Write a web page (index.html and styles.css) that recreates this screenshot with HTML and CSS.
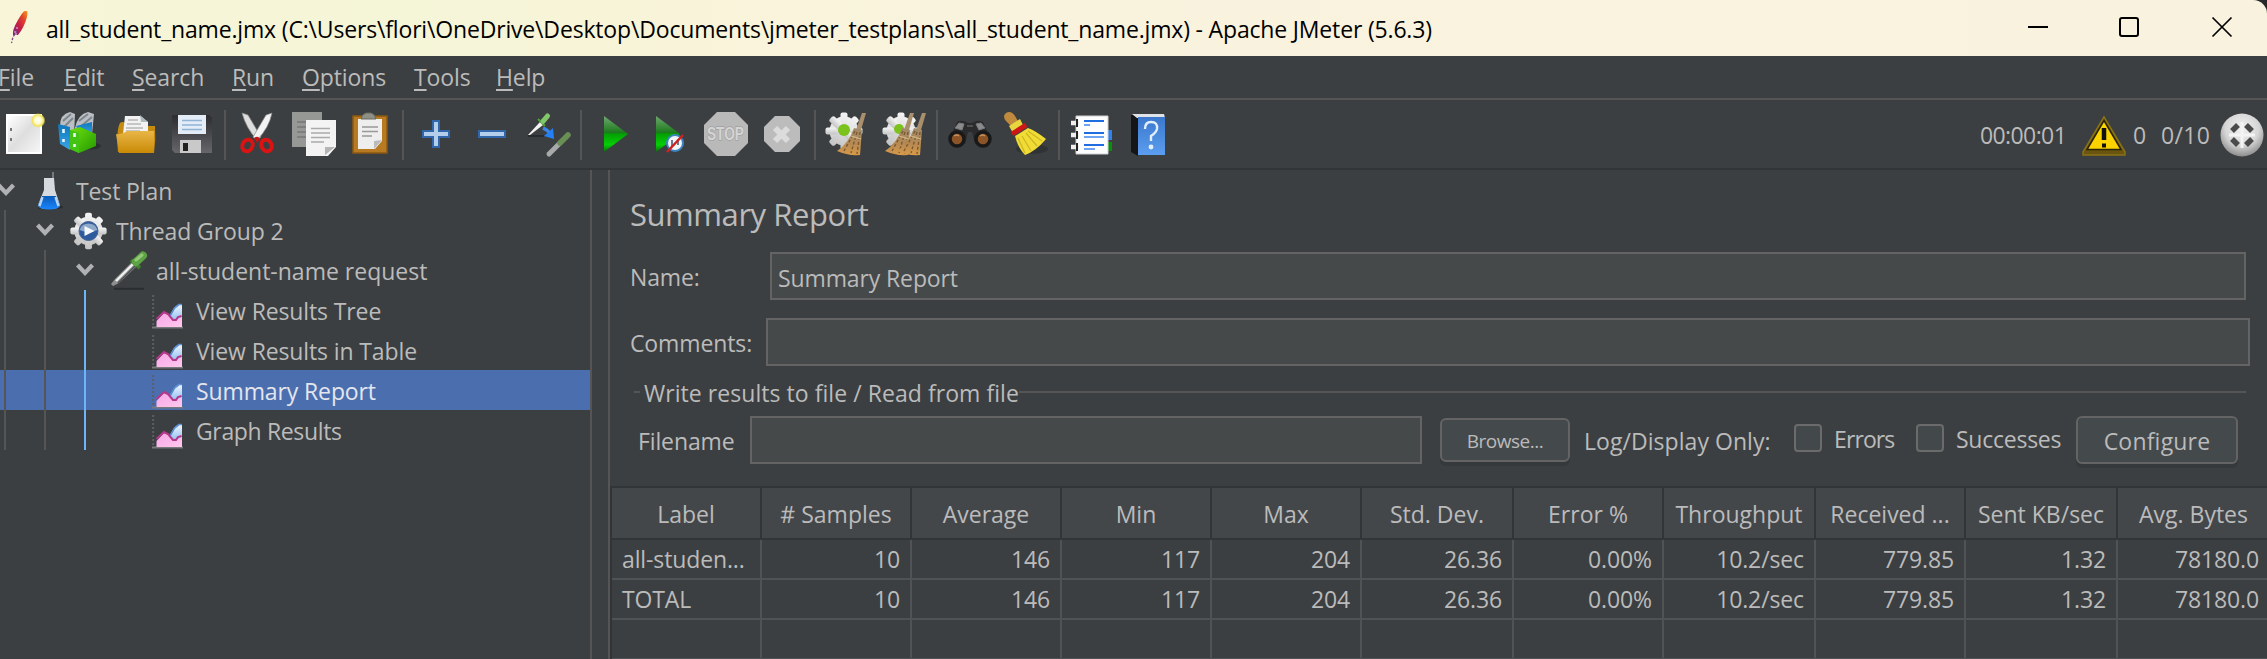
FILE: index.html
```html
<!DOCTYPE html>
<html lang="en">
<head>
<meta charset="utf-8">
<title>Apache JMeter (5.6.3)</title>
<link rel="stylesheet" href="styles.css">
</head>
<body>
<svg class="defs" width="0" height="0" aria-hidden="true">
  <defs>
    <linearGradient id="feather" x1="1" y1="0" x2="0" y2="1"><stop offset="0" stop-color="#f99d1c"/><stop offset=".3" stop-color="#e0452a"/><stop offset=".6" stop-color="#c81d43"/><stop offset="1" stop-color="#6d2a8c"/></linearGradient>
    <linearGradient id="paper" x1="0" y1="0" x2="1" y2="1"><stop offset="0" stop-color="#fff"/><stop offset=".5" stop-color="#dedede"/><stop offset="1" stop-color="#f6f6f6"/></linearGradient>
    <linearGradient id="blue" x1="0" y1="0" x2="0" y2="1"><stop offset="0" stop-color="#0d77bd"/><stop offset="1" stop-color="#3aa5e6"/></linearGradient>
    <linearGradient id="green" x1="0" y1="0" x2="1" y2="1"><stop offset="0" stop-color="#6fe010"/><stop offset="1" stop-color="#239a00"/></linearGradient>
    <linearGradient id="gold" x1="0" y1="0" x2="0" y2="1"><stop offset="0" stop-color="#e9b648"/><stop offset="1" stop-color="#c98a05"/></linearGradient>
    <linearGradient id="floppy" x1="0" y1="0" x2="0" y2="1"><stop offset="0" stop-color="#2c2c2f"/><stop offset="1" stop-color="#66666b"/></linearGradient>
    <linearGradient id="play" x1="0" y1="0" x2="0" y2="1"><stop offset="0" stop-color="#6fa86f"/><stop offset=".46" stop-color="#1c7a1c"/><stop offset=".5" stop-color="#04a004"/><stop offset=".8" stop-color="#06cf06"/><stop offset="1" stop-color="#0a6a0a"/></linearGradient>
    <linearGradient id="gear" x1="0" y1="0" x2="0" y2="1"><stop offset="0" stop-color="#f4f4f4"/><stop offset="1" stop-color="#c4c4c4"/></linearGradient>
    <linearGradient id="straw" x1="0" y1="0" x2="0" y2="1"><stop offset="0" stop-color="#a08a6a"/><stop offset=".6" stop-color="#b88a52"/><stop offset="1" stop-color="#d99a48"/></linearGradient>
    <linearGradient id="help" x1="0" y1="0" x2="0" y2="1"><stop offset="0" stop-color="#3a78cc"/><stop offset="1" stop-color="#5b9df0"/></linearGradient>
    <radialGradient id="ball" cx=".5" cy=".35" r=".65"><stop offset="0" stop-color="#f2f2f2"/><stop offset=".6" stop-color="#d6d6d6"/><stop offset="1" stop-color="#8d8d8d"/></radialGradient>
    <radialGradient id="glow"><stop offset="0" stop-color="#fff"/><stop offset=".45" stop-color="#fdfbc8"/><stop offset=".75" stop-color="#f3e25a"/><stop offset="1" stop-color="#f3e25a" stop-opacity="0"/></radialGradient>
    <linearGradient id="liquid" x1="0" y1="0" x2="0" y2="1"><stop offset="0" stop-color="#0a5bb8"/><stop offset="1" stop-color="#1a86ff"/></linearGradient>
    <linearGradient id="pink" x1="0" y1="0" x2="1" y2="1"><stop offset="0" stop-color="#f7a6e6"/><stop offset="1" stop-color="#ffc8ee"/></linearGradient>
    <linearGradient id="sky" x1="0" y1="0" x2="0" y2="1"><stop offset="0" stop-color="#f2f8ff"/><stop offset="1" stop-color="#8fbcf2"/></linearGradient>
    <g id="chart">
      <path d="M1.200 5V37" stroke="#5d6062" stroke-width="2" stroke-dasharray="2 2"/>
      <path d="M0 37.500H31" stroke="#77797b" stroke-width="2"/>
      <path d="M18 25L23 17L27 14H30V31H20Z" fill="url(#sky)"/>
      <path d="M18 26L22.500 18L27 14.500H30" fill="none" stroke="#5b8ed0" stroke-width="1.600"/>
      <path d="M4.500 31L12 23L17 25L22 31L30 27V37H4.500Z" fill="url(#pink)"/>
      <path d="M4.500 29L12 22L16 24L21 30H24L26 27L29.500 26" fill="none" stroke="#b5388c" stroke-width="2"/>
    </g>
    <path id="chev" d="M0 15L7.500 23L15 15" fill="none" stroke="#afb1b3" stroke-width="4.200"/>
    <g id="gearshape">
      <circle r="14.500"/>
      <g id="teeth"><rect x="-3.500" y="-18.500" width="7" height="37" rx="2"/><rect x="-18.500" y="-3.500" width="37" height="7" rx="2"/></g>
      <use href="#teeth" transform="rotate(45)"/>
    </g>
    <g id="broom">
      <path d="M62 113H66L61 130H56Z" fill="#a98f6b"/>
      <path d="M54 128L62 130L60 155Q48 156 37 151Q49 143 54 128Z" fill="url(#straw)"/>
      <path d="M55 131L44 151M57 132L51 153M60 132L57 154" stroke="#7a5a34" stroke-width="1.400" stroke-dasharray="3 2" fill="none"/>
      <path d="M51 136L61 139" stroke="#cbb083" stroke-width="1.500"/>
    </g>
  </defs>
</svg>

<header class="titlebar">
  <svg class="feather" viewBox="8 8 24 36" width="24" height="36"><path d="M27 11Q28 12 27 17Q24 28 18 35L13 35Q12 30 18 20Q23 11 25 11Z" fill="url(#feather)"/><path d="M17 31L13 37L11.500 43" stroke="#7a4a86" stroke-width="1.300" stroke-dasharray="2.500 1.500" fill="none"/><path d="M14 32h2M16 28h2M15 34h2" stroke="#f3c9d6" stroke-width="1"/></svg>
  <h1 class="title">all_student_name.jmx (C:\Users\flori\OneDrive\Desktop\Documents\jmeter_testplans\all_student_name.jmx) - Apache JMeter (5.6.3)</h1>
  <svg class="winctl" viewBox="2020 8 220 40" width="220" height="40" fill="none" stroke="#000" stroke-width="2"><path d="M2028 27H2048"/><rect x="2120" y="18" width="18" height="18" rx="2"/><path d="M2212.500 17.500L2231.500 36.500M2231.500 17.500L2212.500 36.500" stroke-width="1.700"/></svg>
</header>

<nav class="menubar">
  <span class="menu m-file"><u>F</u>ile</span><span class="menu m-edit"><u>E</u>dit</span><span class="menu m-search"><u>S</u>earch</span><span class="menu m-run"><u>R</u>un</span><span class="menu m-options"><u>O</u>ptions</span><span class="menu m-tools"><u>T</u>ools</span><span class="menu m-help"><u>H</u>elp</span>
</nav>

<div class="toolbar">
  <svg width="50" height="50" viewBox="0 110 50 50"><path d="M6 114H42V154H6Z" fill="#fff"/><path d="M8 116H40V152H8Z" fill="url(#paper)"/><path d="M11 128v3M11 138v3" stroke="#777" stroke-width="2"/><circle cx="38" cy="120.500" r="7.500" fill="url(#glow)"/></svg>
  <svg width="58" height="50" viewBox="50 110 58 50"><path d="M60 126Q60 114 70 112L75 114L74 134L62 136ZM75 128Q78 114 88 112L94 114L92 134L80 136Z" fill="#b9bfc4"/><path d="M63 121L71 114M64 127L73 118M79 121L88 114M80 127L92 117" stroke="#7d848a" stroke-width="1.800"/><path d="M58 124L70 127V150L60 144Z" fill="url(#blue)"/><path d="M76 126L92 122V136L80 134Z" fill="url(#blue)"/><ellipse cx="90" cy="146" rx="11" ry="3.500" fill="#2c2f31"/><path d="M70 130L80 127L96 134V146L79 153L70 149Z" fill="url(#green)"/><path d="M70 130L79 133V153L70 149Z" fill="#43c412"/><path d="M74.500 133v4M74.500 144v3M63.500 129v4M63.500 139v3" stroke="#e9f7ff" stroke-width="2.600"/></svg>
  <svg width="56" height="50" viewBox="108 110 56 50"><path d="M118 152Q116 130 120 123Q122 121 126 123L128 126H155Q156 140 154 153Z" fill="#c58b10"/><path d="M125 116H140L148 122V134H123Z" fill="#f2f2f2"/><path d="M140 115L148 122H141Z" fill="#aebcc0"/><path d="M128 120h10M127 124h14M126 128h17M126 131h14" stroke="#9a9a9a" stroke-width="1.200"/><path d="M116 134Q122 135 127 131L154 131V148Q154 153 150 153H119Z" fill="url(#gold)"/></svg>
  <svg width="60" height="50" viewBox="164 110 60 50"><path d="M173 115H209L212 118V153H175L172 150V116Z" fill="url(#floppy)"/><path d="M178 115H206V134H178Z" fill="#e4edf7"/><path d="M182 120.500h20M182 125h20M182 129.500h20" stroke="#8eb4d8" stroke-width="1.700"/><path d="M180 140H201V153H180Z" fill="#c9c9c9"/><path d="M183 143h5v8h-5z" fill="#222"/></svg>
  <i class="sep"></i>
  <svg width="56" height="50" viewBox="226 110 56 50"><path d="M242 113L248 115L261 137L257 140Q246 128 242 113Z" fill="#dedede" stroke="#888" stroke-width=".7"/><path d="M272 113L266 115L253 137L257 140Q269 128 272 113Z" fill="#f3f3f3" stroke="#888" stroke-width=".7"/><path d="M254 138Q258 135 260 139L257 143Z" fill="#c41414"/><ellipse cx="247.500" cy="145.500" rx="5" ry="6" transform="rotate(28 247.500 145.500)" fill="none" stroke="#dc1313" stroke-width="4"/><ellipse cx="266.500" cy="145.500" rx="5" ry="6" transform="rotate(-28 266.500 145.500)" fill="none" stroke="#dc1313" stroke-width="4"/></svg>
  <svg width="62" height="50" viewBox="282 110 62 50"><path d="M292 112H322V147H292Z" fill="#969896"/><path d="M297 122h14M297 127h10M297 132h10M297 137h10" stroke="#777" stroke-width="1.500"/><path d="M306 120H336V147L328 156H306Z" fill="#f3f3f3"/><path d="M325 155V147H335Z" fill="#b5b5b5"/><path d="M311 128.500h19M311 133h19M311 137.500h19M311 142h13" stroke="#aaa" stroke-width="1.600"/></svg>
  <svg width="58" height="50" viewBox="344 110 58 50"><path d="M353 116H387V153H353Z" fill="#b87a20" stroke="#8c5a12" stroke-width="1.500"/><path d="M358 119H382V141L375 149H358Z" fill="#eee"/><path d="M382 140L374 149V141Z" fill="#bbb"/><path d="M362 127h16M362 131.500h16M362 136h10" stroke="#999" stroke-width="1.700"/><path d="M361 119Q362 114 366 113H371Q375 114 376 119Z" fill="#8e9086" stroke="#66685f"/></svg>
  <i class="sep"></i>
  <svg width="60" height="50" viewBox="404 110 60 50"><path d="M436 120V148M422 134H450" stroke="#3266ab" stroke-width="8"/><path d="M436 122V146M424 134H448" stroke="#b4cdea" stroke-width="4"/></svg>
  <svg width="56" height="50" viewBox="464 110 56 50"><path d="M478 134H506" stroke="#3266ab" stroke-width="8"/><path d="M480 134H504" stroke="#b4cdea" stroke-width="4"/></svg>
  <svg width="60" height="50" viewBox="520 110 60 50"><path d="M528 136H544" stroke="#292c2e" stroke-width="2"/><path d="M528 135L540 122L543 125L530 135Z" fill="#f3f3f3"/><path d="M538 119L545 126M541 121L547 115" stroke="#4d9d3a" stroke-width="2"/><path d="M543 121.500L547.500 116" stroke="#83c56a" stroke-width="5" stroke-linecap="round"/><path d="M543 128Q548 130 550 134" stroke="#3c86e8" stroke-width="3.500" fill="none"/><path d="M553 128L554 139L544 136Z" fill="#2480f5"/><path d="M549 154L560 143" stroke="#a8a9a9" stroke-width="5" stroke-linecap="round"/><path d="M560 143L568 135" stroke="#6a8f55" stroke-width="5.500" stroke-linecap="round"/></svg>
  <i class="sep"></i>
  <svg width="61" height="50" viewBox="582 110 61 50"><path d="M604 116L628 134L604 152Z" fill="url(#play)"/></svg>
  <svg width="51" height="50" viewBox="643 110 51 50"><path d="M656 116L680 134L656 152Z" fill="url(#play)"/><circle cx="675" cy="143" r="8" fill="#f2f5f8" stroke="#3a84c0" stroke-width="2"/><path d="M672 140v6M678 139v6" stroke="#6b7f93" stroke-width="2"/><path d="M667 152L683 135" stroke="#cf2020" stroke-width="2.500"/></svg>
  <svg width="62" height="50" viewBox="694 110 62 50"><path d="M717 112H735L748 125V143L735 156H717L704 143V125Z" fill="#b9b9b9"/><text class="stoptext" x="707" y="140" textLength="37" lengthAdjust="spacingAndGlyphs">STOP</text></svg>
  <svg width="58" height="50" viewBox="756 110 58 50"><path d="M775 116H789L800 127V141L789 152H775L764 141V127Z" fill="#bcbcbc"/><path d="M775 128L788 141M788 128L775 141" stroke="#dcdcdc" stroke-width="6"/></svg>
  <i class="sep"></i>
  <svg width="58" height="50" viewBox="816 110 58 50"><use href="#gearshape" transform="translate(844 131)" fill="url(#gear)"/><circle cx="844" cy="130" r="6" fill="#7cc21c"/><use href="#broom" transform="translate(800 0)"/></svg>
  <svg width="62" height="50" viewBox="874 110 62 50"><use href="#gearshape" transform="translate(901 131)" fill="url(#gear)"/><circle cx="899" cy="129" r="5" fill="#7cc21c"/><use href="#broom" transform="translate(848 0)"/><use href="#broom" transform="translate(860 0)"/></svg>
  <i class="sep"></i>
  <svg width="58" height="50" viewBox="938 110 58 50"><path d="M949 140L957 122Q962 119 968 123H972Q978 119 983 122L991 140L975 144L972 132H968L965 144Z" fill="#2b2b2d"/><path d="M955 128L959 123L964 124L962 130ZM976 124L981 123L985 128L979 130ZM967 126H973" fill="#8b8b8d" stroke="#77797b" stroke-width="1"/><circle cx="957" cy="139" r="7" fill="#8a5426" stroke="#19191a" stroke-width="3.500"/><circle cx="983" cy="139" r="7" fill="#8a5426" stroke="#19191a" stroke-width="3.500"/><path d="M954 136q3-2 5 0M980 136q3-2 5 0" stroke="#c89058" stroke-width="1.500" fill="none"/></svg>
  <svg width="62" height="50" viewBox="996 110 62 50"><ellipse cx="1032" cy="149" rx="16" ry="5" fill="#303335"/><path d="M1006 113Q1011 110 1015 116L1019 123L1011 126L1006 121Q1002 116 1006 113Z" fill="#c08a3e"/><path d="M1009 126L1020 119L1024 127L1013 133Z" fill="#e8d63e"/><path d="M1015 136L1028 128Q1036 131 1046 139Q1036 151 1025 155Q1018 148 1015 136Z" fill="#f0dc34"/><path d="M1018 138L1025 153M1022 136L1031 151M1026 133L1037 146M1028 131L1042 141" stroke="#cdb524" stroke-width="1.200"/><path d="M1012 134L1026 125" stroke="#cf1616" stroke-width="5"/></svg>
  <i class="sep"></i>
  <svg width="62" height="50" viewBox="1060 110 62 50"><path d="M1106 130h6v10h-6z" fill="#2f82ee"/><path d="M1106 142h6v9h-6z" fill="#0a8f0a"/><path d="M1076 116H1108V154H1076Z" fill="#fdfdfd" stroke="#d0d0d0"/><path d="M1084 121h20M1084 133h20M1084 145h20" stroke="#1f6de0" stroke-width="2.200"/><path d="M1084 125h6M1084 137h20M1084 149h11" stroke="#3f86ee" stroke-width="1.700"/><path d="M1071 123h8M1071 135h8M1071 147h8" stroke="#efefef" stroke-width="4.500"/><path d="M1077 119v8M1077 131v8M1077 143v8" stroke="#222" stroke-width="2"/></svg>
  <svg width="60" height="50" viewBox="1122 110 60 50"><path d="M1131 115H1138V156L1131 152Z" fill="#151517"/><path d="M1132 114H1164L1165 118H1137Z" fill="#dfe3e8"/><path d="M1138 117H1165V155H1138Z" fill="url(#help)"/><path d="M1145 129Q1145 122 1151 122Q1158 122 1157 129Q1156 133 1151 136V141" fill="none" stroke="#e2eefc" stroke-width="2.400"/><circle cx="1151" cy="147" r="2.400" fill="#e2eefc"/></svg>
  <div class="status">
    <span class="clock">00:00:01</span>
    <svg class="warn" width="44" height="42" viewBox="2082 112 44 42"><path d="M2104 115L2125 150V153H2083V150Z" fill="#6a5510" stroke="#8a7312" stroke-width="1.500"/><path d="M2104 118.500L2121 147.500H2087Z" fill="#fbd300" stroke="#2b2408" stroke-width="1.500"/><path d="M2104 126V138" stroke="#111" stroke-width="4.500"/><path d="M2102 141.500h4v4h-4z" fill="#111"/></svg>
    <span class="errs">0</span><span class="threads">0/10</span>
    <svg width="46" height="46" viewBox="2219 111 46 46"><circle cx="2242" cy="134" r="21.500" fill="url(#ball)"/><path d="M2232 130L2238 124M2246 124L2252 130M2252 138L2246 144M2238 144L2232 138" stroke="#4b4b4b" stroke-width="5.500"/><path d="M2242 121V147M2229 134H2255" stroke="#f4f4f4" stroke-width="3"/></svg>
  </div>
</div>

<main class="main">
  <aside class="tree">
    <div class="row d0"><svg class="cv" width="16" height="40"><use href="#chev" x="-1.500"/></svg><svg width="36" height="40" viewBox="0 0 36 40"><ellipse cx="11" cy="37" rx="14" ry="2.500" fill="#2a2d2f"/><path d="M15 2V9" stroke="#77797b" stroke-width="2"/><path d="M6 8H16L17 20L22 35Q22 39 11 39Q0 39 0 35L6 20Z" fill="#d6dade"/><path d="M4 26H18L22 35Q21 39.500 11 39.500Q1 39.500 0 35Z" fill="url(#liquid)"/><path d="M4.500 27L1.500 36M17.500 27L20.500 36" stroke="#b7d4f7" stroke-width="2.400"/></svg><span>Test Plan</span></div>
    <div class="row d1"><i class="guide g0"></i><svg class="cv" width="18" height="40"><use href="#chev" x="1.500"/></svg><svg width="37" height="40" viewBox="-18.500 -21 37 40"><use href="#gearshape" transform="scale(.98)" fill="url(#gear)"/><circle r="9.500" fill="#2e5a9e"/><path d="M-9 -1A9.500 9.500 0 0 1 9 -1Q0 3 -9 -1Z" fill="#8da8c9"/><circle r="9.500" fill="none" stroke="#4a6592" stroke-width="1"/><path d="M-4 -5L6 0L-4 5Z" fill="#f5f8fc"/></svg><span>Thread Group 2</span></div>
    <div class="row d2"><i class="guide g0"></i><i class="guide g1"></i><svg class="cv" width="18" height="40"><use href="#chev" x="1.500"/></svg><svg width="40" height="40" viewBox="0 0 40 40"><path d="M4 38.800H34" stroke="#2a2d2f" stroke-width="2"/><path d="M1 34L5 29L22 12L27 16L9 33L3 36Z" fill="#8d8f90"/><path d="M6 31L23 14" stroke="#f0f0f0" stroke-width="2.400"/><path d="M8 33L25 16" stroke="#4a4c4d" stroke-width="1.200"/><path d="M21 10L30 18" stroke="#3f7f2e" stroke-width="4"/><path d="M26 12L33 5.500" stroke="#5da244" stroke-width="8" stroke-linecap="round"/><path d="M26 10L32 5" stroke="#93c877" stroke-width="3" stroke-linecap="round"/></svg><span>all-student-name request</span></div>
    <div class="row d3"><i class="guide g0"></i><i class="guide g1"></i><i class="guide g2"></i><svg width="32" height="40"><use href="#chart"/></svg><span>View Results Tree</span></div>
    <div class="row d3"><i class="guide g0"></i><i class="guide g1"></i><i class="guide g2"></i><svg width="32" height="40"><use href="#chart"/></svg><span>View Results in Table</span></div>
    <div class="row d3 selected"><i class="guide g0"></i><i class="guide g1"></i><i class="guide g2"></i><svg width="32" height="40"><use href="#chart"/></svg><span>Summary Report</span></div>
    <div class="row d3"><i class="guide g0"></i><i class="guide g1"></i><i class="guide g2"></i><svg width="32" height="40"><use href="#chart"/></svg><span class="tight">Graph Results</span></div>
  </aside>
  <section class="panel">
    <h2 class="heading">Summary Report</h2>
    <div class="field name"><label>Name:</label><div class="input">Summary Report</div></div>
    <div class="field comments"><label>Comments:</label><div class="input"></div></div>
    <div class="group"><i class="rule start"></i><span>Write results to file / Read from file</span><i class="rule"></i></div>
    <div class="filebar">
      <label class="fn">Filename</label><div class="input file"></div>
      <div class="button browse">Browse...</div>
      <span class="log">Log/Display Only:</span>
      <i class="check"></i><span class="errors">Errors</span>
      <i class="check"></i><span class="succ">Successes</span>
      <div class="button configure">Configure</div>
    </div>
    <div class="table">
      <div class="tr head"><div>Label</div><div># Samples</div><div>Average</div><div>Min</div><div>Max</div><div>Std. Dev.</div><div>Error %</div><div>Throughput</div><div>Received ...</div><div>Sent KB/sec</div><div>Avg. Bytes</div></div>
      <div class="tr"><div>all-studen...</div><div>10</div><div>146</div><div>117</div><div>204</div><div>26.36</div><div>0.00%</div><div>10.2/sec</div><div>779.85</div><div>1.32</div><div>78180.0</div></div>
      <div class="tr"><div>TOTAL</div><div>10</div><div>146</div><div>117</div><div>204</div><div>26.36</div><div>0.00%</div><div>10.2/sec</div><div>779.85</div><div>1.32</div><div>78180.0</div></div>
      <div class="tr"><div></div><div></div><div></div><div></div><div></div><div></div><div></div><div></div><div></div><div></div><div></div></div>
    </div>
  </section>
</main>
</body>
</html>
```
FILE: styles.css
```css
* { box-sizing: border-box; }
body {
  margin: 0; width: 2267px; height: 659px; overflow: hidden;
  display: flex; flex-direction: column;
  background: #3c3f41; color: #bbb;
  font: 23px/40px "Open Sans", "Noto Sans", sans-serif;
  letter-spacing: -0.12px; white-space: nowrap;
}
svg { display: block; flex: none; }
.defs { position: absolute; }
i { font-style: normal; }

.titlebar {
  height: 56px; flex: none; display: flex; align-items: center;
  padding: 0 27px 4px 8px; color: #000;
  background: linear-gradient(90deg, #f8f5d8 0, #f5f5d8 18%, #f8f4d8 27%, #f9f3de 45%, #f9f2df 100%);
  border-top-right-radius: 14px; box-shadow: 14px -14px 0 #26282a;
}
.title { margin: 5px 0 0 14px; font-size: 23px; font-weight: 400; letter-spacing: -0.17px; }
.winctl { margin: 4px 0 0 auto; }

.menubar { height: 44px; flex: none; display: flex; border-bottom: 2px solid #555; line-height: 43px; }
.menu { flex: none; }
.menu u { text-decoration: underline; text-decoration-thickness: 2px; text-underline-offset: 3px; text-decoration-skip-ink: none; }
.m-file { width: 66px; margin-left: -2px; }
.m-edit { width: 68px; }
.m-search { width: 100px; }
.m-run { width: 70px; }
.m-options { width: 112px; }
.m-tools { width: 82px; }

.toolbar { height: 70px; flex: none; display: flex; align-items: center; padding-top: 2px; border-bottom: 2px solid #323537; }
.sep { width: 2px; height: 50px; background: #555; }
.status { margin-left: auto; display: flex; align-items: center; padding-right: 2px; }
.clock { width: 102px; letter-spacing: -0.6px; }
.errs { width: 28px; margin-left: 7px; }
.threads { width: 57px; letter-spacing: 0.3px; margin-right: 1px; }
.stoptext { font: bold 19px "Liberation Sans", sans-serif; letter-spacing: 0; fill: #d4d4d4; stroke: #a2a2a2; stroke-width: 1.500px; paint-order: stroke; }

.main { flex: 1; display: flex; min-height: 0; }
.tree { width: 592px; border-right: 2px solid #555; flex: none; }
.row { height: 40px; display: flex; position: relative; line-height: 42px; }
.d1 { padding-left: 36px; }
.d2 { padding-left: 76px; }
.d3 { padding-left: 152px; }
.d0 .cv { margin-right: 22px; }
.d0 span { padding-left: 2px; }
.d1 .cv { margin-right: 16px; }
.d1 span { padding-left: 9px; }
.d2 .cv { margin-right: 16px; }
.d2 span { padding-left: 6px; letter-spacing: 0; }
.d3 span { padding-left: 12px; }
.tight { letter-spacing: -0.35px; }
.selected { background: #4b6eaf; color: #e3e6ec; }
.guide { position: absolute; top: 0; width: 2px; height: 40px; background: #555; }
.g0 { left: 4px; }
.g1 { left: 44px; }
.g2 { left: 84px; background: #6cb5f9; }

.panel { flex: 1; margin-left: 16px; border-left: 2px solid #555; display: flex; flex-direction: column; min-width: 0; }
.heading { margin: 24px 0 0 20px; height: 58px; font-size: 31px; line-height: 41px; font-weight: 400; letter-spacing: -0.45px; }
.field { display: flex; align-items: center; height: 48px; margin: 0 21px 18px 20px; }
.field label { padding-top: 2px; }
.input { height: 48px; border: 2px solid #646464; background: #45494a; flex: 1; line-height: 48px; padding-left: 6px; }
.name label { width: 140px; }
.comments label { width: 136px; }
.comments { margin-right: 17px; margin-bottom: 13px; }
.group { height: 26px; display: flex; align-items: center; margin: 0 21px 0 24px; }
.group span { padding: 1px 0 0 4px; letter-spacing: 0.05px; }
.rule { height: 2px; background: #555; flex: 1; }
.start { flex: none; width: 6px; }
.filebar { display: flex; height: 48px; margin: 11px 0 22px; padding-left: 28px; line-height: 51px; }
.fn { width: 112px; }
.file { flex: none; width: 672px; }
.button { border: 2px solid #646464; border-radius: 6px; background: #44494b; text-align: center; box-shadow: 0 4px 0 #36393b; }
.browse { width: 130px; height: 44px; margin: 2px 14px 0 18px; font-size: 19px; line-height: 42px; letter-spacing: -0.5px; }
.log { width: 210px; letter-spacing: 0.05px; }
.check { width: 28px; height: 28px; margin-top: 8px; border: 2px solid #6b6b6b; border-radius: 4px; background: #43494a; }
.errors { width: 82px; margin-left: 12px; line-height: 47px; letter-spacing: -0.9px; }
.succ { width: 120px; margin-left: 12px; line-height: 47px; letter-spacing: -0.25px; }
.configure { width: 162px; height: 48px; line-height: 47px; letter-spacing: 0.2px; }

.table { flex: 1; border-top: 2px solid #323537; border-left: 2px solid #323537; overflow: hidden; }
.tr { display: grid; grid-template-columns: 150px 150px 150px 150px 150px 152px 150px 152px 150px 152px 151px; height: 40px; }
.tr div { border-right: 2px solid #505355; border-bottom: 2px solid #505355; text-align: right; padding-right: 10px; line-height: 38px; }
.tr div:first-child { text-align: left; padding-left: 10px; padding-right: 0; }
.tr div:last-child { border-right: 0; }
.tr.head { height: 52px; }
.tr.head div, .tr.head div:first-child { border-color: #323537; background: #44474a; text-align: center; padding: 2px 0 0; line-height: 48px; letter-spacing: 0; }
```
